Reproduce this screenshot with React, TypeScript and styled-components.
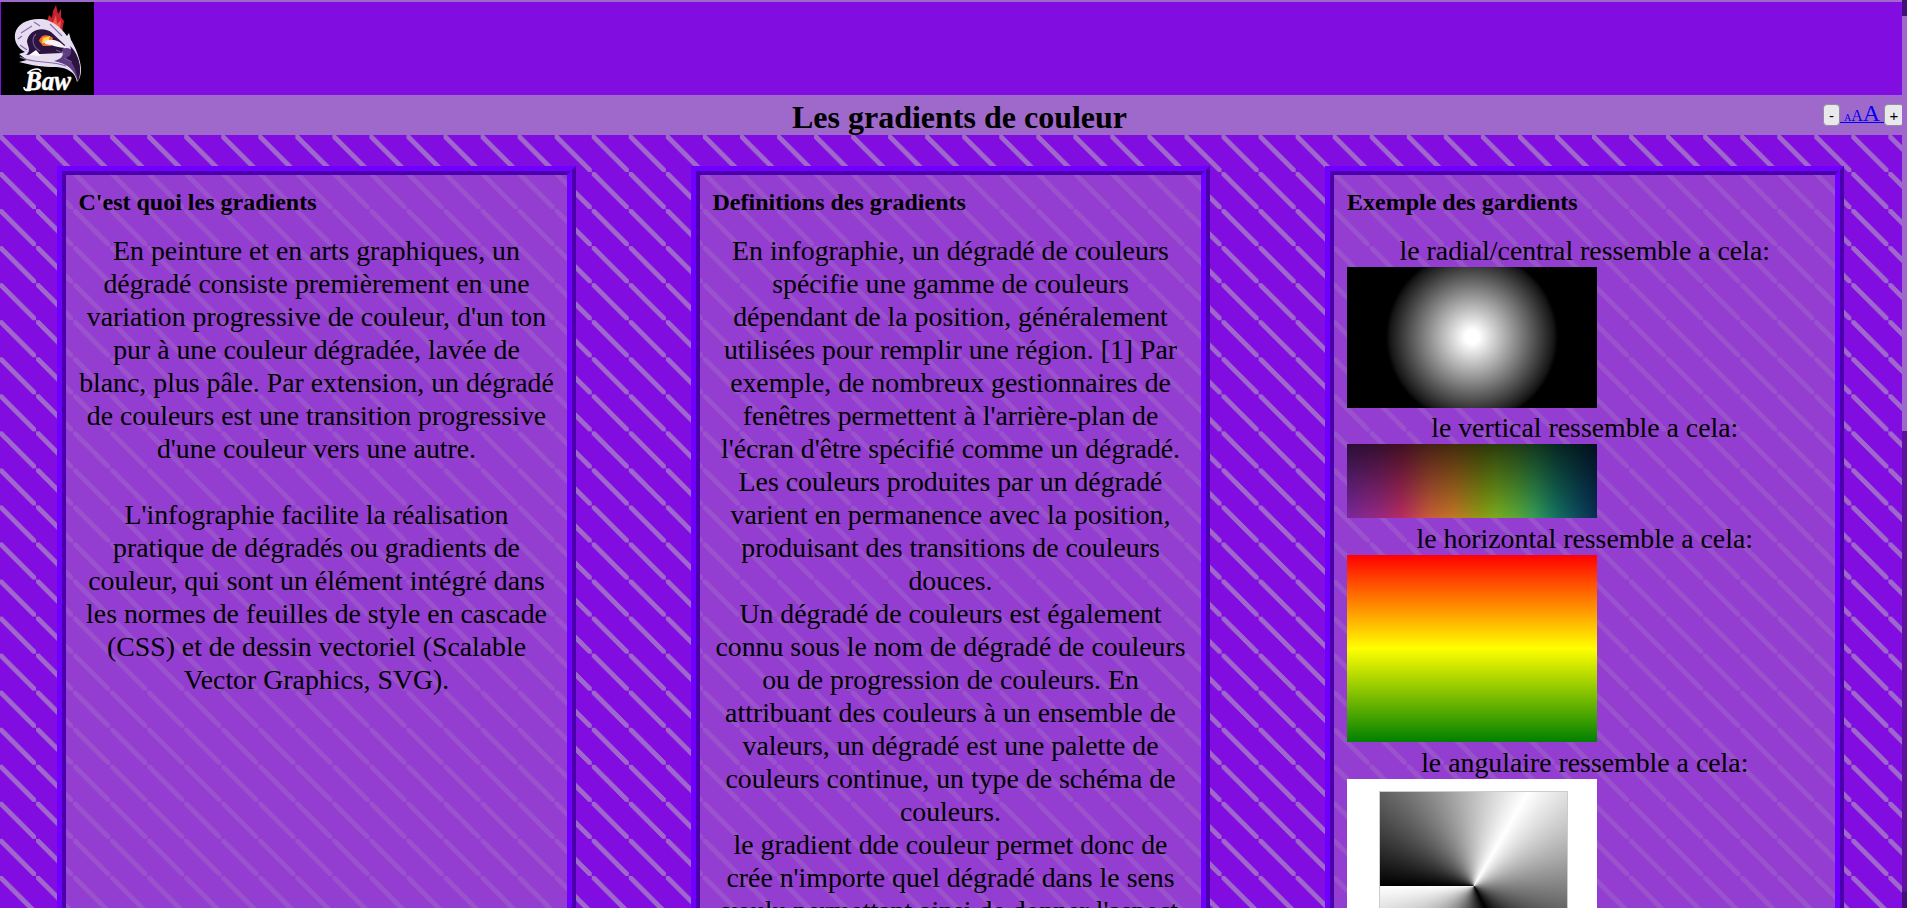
import React from 'react';
import styled, { createGlobalStyle } from 'styled-components';

const Global = createGlobalStyle`
  html, body { margin: 0; padding: 0; height: 908px; overflow: hidden; }
  body { font-family: "Liberation Serif", serif; color: #000; background: #9f69cb; }
  * { box-sizing: border-box; }
`;

const Page = styled.div`
  display: grid;
  grid-template-columns: 1fr 5px;
  height: 908px;
  overflow: hidden;
`;
const Content = styled.div`
  min-width: 0;
  height: 908px;
  overflow: hidden;
  display: flex;
  flex-direction: column;
`;
const ScrollTrack = styled.div`
  display: flex;
  flex-direction: column;
  justify-content: space-between;
  background: #5f109f;
`;
const ScrollButton = styled.div`
  height: 16px;
  background: #43107a;
`;
const ScrollThumb = styled.div`
  height: 415px;
  margin-bottom: auto;
  background: #9f69cb;
`;
const Header = styled.header`
  flex: none;
  height: 95px;
  padding: 0 0 0 1px;
  border-top: 2px solid #9f69cb;
  background: #820de0;
`;
const LogoSvg = styled.svg`
  display: block;
  width: 93px;
  height: 93px;
  background: #000;
`;
const TitleBar = styled.div`
  flex: none;
  height: 40px;
  display: grid;
  grid-template-columns: 1fr auto 1fr;
  background: #9f69cb;
`;
const Title = styled.h1`
  grid-column: 2;
  margin: 4px 0 0 17px;
  font-size: 32px;
  line-height: 36px;
`;
const Sizer = styled.div`
  display: flex;
  justify-content: flex-end;
  padding-top: 9px;
  margin-right: -2px;
`;
const SizeButton = styled.button<{ $w: number }>`
  width: ${(p) => p.$w}px;
  height: 22px;
  padding: 0;
  border: 1px solid #8f8f9d;
  border-radius: 4px;
  background: #e9e9ed;
  color: #000;
  font: 15px/19px "Liberation Sans", sans-serif;
`;
const SizeLink = styled.a`
  height: 19px;
  width: 44px;
  padding-left: 4px;
  color: #0000ee;
  border-bottom: 1px solid #0000ee;
  display: flex;
  align-items: baseline;
  line-height: 18px;
  white-space: nowrap;
`;
const Letter = styled.span<{ $s: number }>`
  font-size: ${(p) => p.$s}px;
`;
const Main = styled.main`
  flex: 1;
  min-height: 0;
  display: grid;
  grid-template-columns: repeat(3, 519px);
  column-gap: 115px;
  padding: 31px 0 0 57px;
  background: linear-gradient(45deg, #820de0 45%, #9f69cb 45%, #9f69cb 55%, #820de0 55%) -1px 0 / 37.06px 37.06px;
`;
const Card = styled.section<{ $inset?: number }>`
  height: 900px;
  border: 9px ridge #6f00ff;
  padding: 13px 12.5px 13px ${(p) => p.$inset ?? 12.5}px;
  background: rgba(154, 76, 205, 0.78);
  background-clip: padding-box;
`;
const CardTitle = styled.h2`
  margin: 0 0 17px;
  font-size: 24px;
  line-height: 29px;
`;
const Line = styled.div`
  min-height: 33px;
  font-size: 27.8px;
  line-height: 33px;
  text-align: center;
  white-space: nowrap;
`;
const Figure = styled.div<{ $h: number }>`
  width: 250px;
  height: ${(p) => p.$h}px;
  margin-bottom: 4px;
`;
const Radial = styled(Figure)`
  margin-bottom: 3px;
  background: radial-gradient(circle 86px at 125px 70px, #fff 8%, #161616 95%, #000 100%);
`;
const Spectrum = styled(Figure)`
  background:
    linear-gradient(rgba(0, 0, 0, 0.65), rgba(0, 0, 0, 0)),
    linear-gradient(90deg, #78289c, #982880 13%, #b82c60 22%, #c85c38 33%, #c07824 43%, #8c9c14 54%, #78ac20 60%, #58a838 68%, #349c54 75%, #147060 84%, #0c4c5c 92%, #082c54);
`;
const Sunset = styled(Figure)`
  background: linear-gradient(red, yellow 50%, green);
`;
const Angular = styled(Figure)`
  padding: 12px 29px 0 32px;
  background: #fff;
`;
const Cone = styled.div`
  height: 190px;
  border: 1px solid #ccc;
  background: conic-gradient(from 270deg at 94px 94px, #000, #fff 120deg, #000 243deg, #fff);
`;

const intro = [
  'En peinture et en arts graphiques, un',
  'dégradé consiste premièrement en une',
  "variation progressive de couleur, d'un ton",
  'pur à une couleur dégradée, lavée de',
  'blanc, plus pâle. Par extension, un dégradé',
  'de couleurs est une transition progressive',
  "d'une couleur vers une autre.",
  '',
  "L'infographie facilite la réalisation",
  'pratique de dégradés ou gradients de',
  'couleur, qui sont un élément intégré dans',
  'les normes de feuilles de style en cascade',
  '(CSS) et de dessin vectoriel (Scalable',
  'Vector Graphics, SVG).',
];
const definitions = [
  'En infographie, un dégradé de couleurs',
  'spécifie une gamme de couleurs',
  'dépendant de la position, généralement',
  'utilisées pour remplir une région. [1] Par',
  'exemple, de nombreux gestionnaires de',
  "fenêtres permettent à l'arrière-plan de",
  "l'écran d'être spécifié comme un dégradé.",
  'Les couleurs produites par un dégradé',
  'varient en permanence avec la position,',
  'produisant des transitions de couleurs',
  'douces.',
  'Un dégradé de couleurs est également',
  'connu sous le nom de dégradé de couleurs',
  'ou de progression de couleurs. En',
  'attribuant des couleurs à un ensemble de',
  'valeurs, un dégradé est une palette de',
  'couleurs continue, un type de schéma de',
  'couleurs.',
  'le gradient dde couleur permet donc de',
  "crée n'importe quel dégradé dans le sens",
  "voulu permettant ainsi de donner l'aspect",
];

const Logo = () => (
  <LogoSvg viewBox="1 2 93 93">
    <path d="M46 24 L49 15 L52 18 L53 11 L56 5 L58 14 L61 9 L61 17 L64 21 L62 32 L56 31Z" fill="#c8202e" />
    <path d="M52 25 L56 15 L57 24 L61 20 L60 30Z" fill="#f05a4a" />
    <path d="M15 34 C17 23 29 18 42 19 C51 20 60 26 67 36 L69 33 L71 40 C74 45 78 53 80 62 C82 70 81 78 77 82 C75 72 68 68 56 67 C42 67 30 65 19 62 L27 60 L19 54 L25 52 C18 48 14 42 15 34Z" fill="#e6def0" />
    <path d="M27 41 C29 30 42 26 51 32 L65 45 L62 53 L40 54 L26 55 C32 50 27 46 27 41Z" fill="#2b1440" />
    <path d="M62 49 C74 43 84 63 78 82 C74 69 68 64 54 61 C61 59 65 56 62 49Z" fill="#5d3c82" />
    <path d="M70 46 C79 54 83 70 78 81 C76 69 73 62 66 58 C72 56 72 51 70 46Z" fill="#2b1440" />
    <path d="M39 41 C41 34 48 34 53 38 L51 46 L43 46Z" fill="#ee6b2f" />
    <path d="M43 38 L50 36 L48 43 L42 43Z" fill="#ffd84a" />
    <path d="M45 41 C52 38 60 40 66 48 C59 48 53 45 45 44Z" fill="#f7f1fa" />
    <path d="M29 55 L36 50 L41 56Z" fill="#fff" />
    <path d="M20 57 C34 64 50 60 66 66 M20 45 L27 50 M21 33 L32 26 M18 39 L22 36 M34 22 L40 26 M50 24 L62 36" fill="none" stroke="#8c6aab" strokeWidth="1.2" />
    <path d="M36 34 C30 40 34 48 40 51 M56 50 L65 54 M64 58 L72 62" fill="none" stroke="#765394" strokeWidth="1.2" />
    <path d="M28 74 C30 69 40 67 41 72 M24 87 C24 91 28 91 31 90" fill="none" stroke="#fff" strokeWidth="1.6" />
    <text x="25" y="90" fill="#fff" stroke="#fff" strokeWidth=".5" fontFamily="Liberation Serif, serif" fontStyle="italic" fontWeight="700" fontSize="28" textLength="46" lengthAdjust="spacingAndGlyphs">Baw</text>
  </LogoSvg>
);

export default function App() {
  return (
    <>
      <Global />
      <Page>
        <Content>
          <Header><Logo /></Header>
          <TitleBar>
            <Title>Les gradients de couleur</Title>
            <Sizer>
              <SizeButton $w={17}>-</SizeButton>
              <SizeLink>
                <Letter $s={10}>A</Letter>
                <Letter $s={16}>A</Letter>
                <Letter $s={24}>A</Letter>
              </SizeLink>
              <SizeButton $w={20}>+</SizeButton>
            </Sizer>
          </TitleBar>
          <Main>
            <Card>
              <CardTitle>C'est quoi les gradients</CardTitle>
              {intro.map((t, i) => <Line key={i}>{t}</Line>)}
            </Card>
            <Card>
              <CardTitle>Definitions des gradients</CardTitle>
              {definitions.map((t, i) => <Line key={i}>{t}</Line>)}
            </Card>
            <Card $inset={13}>
              <CardTitle>Exemple des gardients</CardTitle>
              <Line>le radial/central ressemble a cela:</Line>
              <Radial $h={141} />
              <Line>le vertical ressemble a cela:</Line>
              <Spectrum $h={74} />
              <Line>le horizontal ressemble a cela:</Line>
              <Sunset $h={187} />
              <Line>le angulaire ressemble a cela:</Line>
              <Angular $h={210}><Cone /></Angular>
            </Card>
          </Main>
        </Content>
        <ScrollTrack>
          <ScrollButton />
          <ScrollThumb />
          <ScrollButton />
        </ScrollTrack>
      </Page>
    </>
  );
}
